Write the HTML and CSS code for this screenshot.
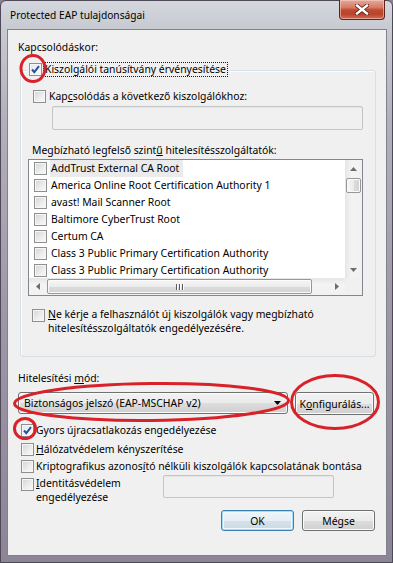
FILE: index.html
```html
<!DOCTYPE html>
<html lang="hu">
<head>
<meta charset="utf-8">
<link rel="stylesheet" href="styles.css">
</head>
<body>
<div class="window">
  <div class="titlebar">
    <span class="title">Protected EAP tulajdonságai</span>
    <div class="close">
      <svg width="14" height="11" viewBox="0 0 14 11"><path d="M2 1.5 L12 9.5 M12 1.5 L2 9.5" stroke="#5a1a10" stroke-width="4" stroke-linecap="square"/><path d="M2 1.5 L12 9.5 M12 1.5 L2 9.5" stroke="#fff" stroke-width="2.4" stroke-linecap="square"/></svg>
    </div>
  </div>
  <div class="client">
    <div class="lbl lbl-top">Kapcsolódáskor:</div>
    <div class="group">
      <div class="legend">
        <span class="cb checked"><svg width="11" height="11" viewBox="0 0 11 11"><path d="M2 5.5 L4.3 8.2 L9 2.2" fill="none" stroke="#2a4f9c" stroke-width="2"/></svg></span>
        <span class="focus">Kiszolgálói tanúsítvány érvényesítése</span>
      </div>
      <div class="row row-connect"><span class="cb"></span><span>Kap<u>c</u>solódás a következő kiszolgálókhoz:</span></div>
      <div class="textbox tb-servers"></div>
      <div class="lbl lbl-ca">Megbízható legfelső szint<u>ű</u> hitelesítésszolgáltatók:</div>
      <div class="listbox">
        <div class="list-main">
          <div class="list-rows">
            <div class="li"><span class="cb"></span><span class="li-text sel">AddTrust External CA Root</span></div>
            <div class="li"><span class="cb"></span><span class="li-text">America Online Root Certification Authority 1</span></div>
            <div class="li"><span class="cb"></span><span class="li-text">avast! Mail Scanner Root</span></div>
            <div class="li"><span class="cb"></span><span class="li-text">Baltimore CyberTrust Root</span></div>
            <div class="li"><span class="cb"></span><span class="li-text">Certum CA</span></div>
            <div class="li"><span class="cb"></span><span class="li-text">Class 3 Public Primary Certification Authority</span></div>
            <div class="li"><span class="cb"></span><span class="li-text">Class 3 Public Primary Certification Authority</span></div>
          </div>
          <div class="vscroll">
            <div class="sb-btn"><svg width="7" height="4" viewBox="0 0 7 4"><path d="M3.5 0 L7 4 L0 4 Z" fill="#6d6d6d"/></svg></div>
            <div class="vthumb"></div>
            <div class="sb-fill"></div>
            <div class="sb-btn"><svg width="7" height="4" viewBox="0 0 7 4"><path d="M0 0 L7 0 L3.5 4 Z" fill="#6d6d6d"/></svg></div>
          </div>
        </div>
        <div class="hscroll-row">
          <div class="hscroll">
            <div class="sb-btn h"><svg width="4" height="7" viewBox="0 0 4 7"><path d="M4 0 L4 7 L0 3.5 Z" fill="#6d6d6d"/></svg></div>
            <div class="hthumb"><span class="grip"></span><span class="grip"></span><span class="grip"></span></div>
            <div class="sb-fill"></div>
            <div class="sb-btn h"><svg width="4" height="7" viewBox="0 0 4 7"><path d="M0 0 L4 3.5 L0 7 Z" fill="#6d6d6d"/></svg></div>
          </div>
          <div class="corner"></div>
        </div>
      </div>
      <div class="row row-ne multi"><span class="cb"></span><span><u>N</u>e kérje a felhasználót új kiszolgálók vagy megbízható<br>hitelesítésszolgáltatók engedélyezésére.</span></div>
    </div>
    <div class="lbl lbl-mode">Hitelesítési <u>m</u>ód:</div>
    <div class="mode-row">
      <div class="combo"><span>Biztonságos jelszó (EAP-MSCHAP v2)</span><svg width="7" height="4" viewBox="0 0 7 4"><path d="M0 0 L7 0 L3.5 4 Z" fill="#000"/></svg></div>
      <div class="btn btn-config">K<u>o</u>nfigurálás...</div>
    </div>
    <div class="row opt opt-fast"><span class="cb checked"><svg width="11" height="11" viewBox="0 0 11 11"><path d="M2 5.5 L4.3 8.2 L9 2.2" fill="none" stroke="#2a4f9c" stroke-width="2"/></svg></span><span>Gyors újracsatlakozás engedélyezése</span></div>
    <div class="row opt opt-nap"><span class="cb"></span><span><u>H</u>álózatvédelem kényszerítése</span></div>
    <div class="row opt opt-crypto"><span class="cb"></span><span>Kriptografikus azonos<u>í</u>tó nélküli kiszolgálók kapcsolatának bontása</span></div>
    <div class="ident-row">
      <div class="row opt multi ident"><span class="cb"></span><span><u>I</u>dentitásvédelem<br>engedélyezése</span></div>
      <div class="textbox tb-ident"></div>
    </div>
    <div class="buttons">
      <div class="btn btn-default">OK</div>
      <div class="btn">Mégse</div>
    </div>
  </div>
  <svg class="annot" width="393" height="563" viewBox="0 0 393 563">
    <ellipse cx="33" cy="68.5" rx="12" ry="13" fill="none" stroke="#d8222a" stroke-width="3"/>
    <ellipse cx="151.5" cy="402" rx="137" ry="18.5" fill="none" stroke="#d8222a" stroke-width="3" transform="rotate(-0.6 151.5 402)"/>
    <ellipse cx="335" cy="402" rx="43.5" ry="26.5" fill="none" stroke="#d8222a" stroke-width="3"/>
    <ellipse cx="25" cy="428.5" rx="10.5" ry="10" fill="none" stroke="#d8222a" stroke-width="3"/>
  </svg>
</div>
</body>
</html>
```
FILE: styles.css
```css
* { box-sizing: border-box; }
html, body { margin: 0; padding: 0; }
body {
  width: 393px;
  height: 563px;
  overflow: hidden;
  background: #8a8292;
  font-family: "Noto Sans", sans-serif;
  font-size: 10.4px;
  color: #000;
}
u { text-decoration: underline; text-underline-offset: 1px; }

.window {
  position: relative;
  width: 393px;
  height: 563px;
  display: flex;
  flex-direction: column;
  background: linear-gradient(180deg, #d4d7dd 0px, #c7cad1 28px, #b3afbc 120px, #a098a9 300px, #8d8597 563px);
  border: 1px solid #4d4956;
  border-radius: 6px 6px 0 0;
  padding: 0 5px 6px 6px;
}

.titlebar {
  height: 28px;
  display: flex;
  justify-content: space-between;
  align-items: flex-start;
  flex: none;
}
.title {
  margin: 7px 0 0 3px;
  line-height: 15px;
  font-size: 10.2px;
}
.close {
  margin: -1px 2px 0 0;
  width: 46px;
  height: 20px;
  border: 1px solid #5e2418;
  border-top: none;
  border-radius: 0 0 4px 4px;
  background: linear-gradient(180deg, #e4aa9c 0%, #d47a64 40%, #c04a30 52%, #b8442a 75%, #d2705a 100%);
  box-shadow: inset 0 0 0 1px rgba(255, 210, 200, 0.55);
  display: flex;
  align-items: center;
  justify-content: center;
}

.client {
  flex: 1;
  background: #f0f0f0;
  border: 1px solid #7f838c;
  padding: 10px 11px 0 10px;
  display: flex;
  flex-direction: column;
  align-items: flex-start;
}

.lbl { line-height: 15px; white-space: nowrap; }

.cb {
  flex: none;
  width: 13px;
  height: 13px;
  border: 1px solid #8e8f8f;
  background: linear-gradient(135deg, #d2d3d6 0%, #eeeeee 60%, #f9f9f9 100%);
  box-shadow: inset 0 0 0 1px #f6f6f6;
  display: flex;
  align-items: center;
  justify-content: center;
}
.cb.checked {
  background: linear-gradient(135deg, #dfe8f4 0%, #f2f6fb 70%, #ffffff 100%);
}

.row {
  display: flex;
  align-items: center;
  gap: 3px;
  line-height: 15px;
  white-space: nowrap;
}
.row.multi { align-items: flex-start; line-height: 14px; }
.row.multi .cb { margin-top: 2px; }

.group {
  margin: 15px 0 0 2px;
  width: 356px;
  height: 287px;
  border: 1px solid #d5dfe5;
  border-radius: 3px;
  box-shadow: inset 1px 1px 0 #fdfdfd;
  display: flex;
  flex-direction: column;
  align-items: flex-start;
}
.legend {
  margin: -9px 0 0 6px;
  padding: 0 2px;
  height: 15px;
  background: #f0f0f0;
  display: flex;
  align-items: center;
  white-space: nowrap;
}
.focus {
  margin-left: 1px;
  border: 1px dotted #1a1a1a;
  padding: 0 1px;
  line-height: 13px;
}
.row-connect { margin: 12px 0 0 12px; }

.textbox {
  border: 1px solid #c3c6c9;
  border-radius: 2px;
  background: #f0f0f0;
  box-shadow: inset 0 1px 0 #e6e6e6;
}
.tb-servers { margin: 2px 0 0 31px; width: 311px; height: 24px; }

.lbl-ca { margin: 13px 0 0 11px; }

.listbox {
  margin: 1px 0 0 7px;
  width: 335px;
  height: 137px;
  border: 1px solid #828790;
  background: #fff;
  display: flex;
  flex-direction: column;
}
.list-main { height: 118px; display: flex; }
.list-rows { flex: 1; overflow: hidden; }
.li {
  height: 17px;
  display: flex;
  align-items: center;
  padding-left: 5px;
  white-space: nowrap;
}
.li-text { margin-left: 3px; padding: 0 1px; line-height: 17px; }
.li-text.sel { background: #ebebeb; padding-right: 4px; }

.vscroll {
  width: 17px;
  display: flex;
  flex-direction: column;
  background: linear-gradient(90deg, #e6e6e6 0%, #f4f4f4 40%, #f1f1f1 100%);
}
.sb-btn {
  flex: none;
  width: 17px;
  height: 17px;
  display: flex;
  align-items: center;
  justify-content: center;
}
.vthumb {
  flex: none;
  height: 15px;
  margin: 1px 1px 0 1px;
  border: 1px solid #979797;
  border-radius: 2px;
  background: linear-gradient(90deg, #f6f6f6 0%, #ececec 50%, #dcdcdc 51%, #d3d3d3 100%);
  box-shadow: inset 0 0 0 1px #fbfbfb;
}
.sb-fill { flex: 1; }

.hscroll-row { height: 17px; display: flex; }
.hscroll {
  flex: 1;
  display: flex;
  background: linear-gradient(180deg, #e6e6e6 0%, #f4f4f4 40%, #f1f1f1 100%);
}
.hthumb {
  flex: none;
  width: 265px;
  margin: 1px 0 1px 1px;
  border: 1px solid #979797;
  border-radius: 2px;
  background: linear-gradient(180deg, #f6f6f6 0%, #ececec 50%, #dcdcdc 51%, #d3d3d3 100%);
  box-shadow: inset 0 0 0 1px #fbfbfb;
  display: flex;
  align-items: center;
  justify-content: center;
  gap: 2px;
}
.grip { width: 1px; height: 6px; background: #5b5b5b; box-shadow: 1px 0 0 #fff; }
.corner { width: 17px; background: #f0f0f0; }

.row-ne { margin: 11px 0 0 11px; }

.lbl-mode { margin-top: 14px; }

.mode-row {
  margin-top: 6px;
  display: flex;
  align-items: flex-start;
}
.combo {
  width: 270px;
  height: 22px;
  border: 1px solid #707070;
  border-radius: 3px;
  background: linear-gradient(180deg, #f2f2f2 0%, #ebebeb 50%, #dddddd 51%, #cfcfcf 100%);
  box-shadow: inset 0 0 0 1px #fbfbfb;
  display: flex;
  align-items: center;
  justify-content: space-between;
  padding: 0 6px 0 5px;
  white-space: nowrap;
}
.btn {
  height: 22px;
  border: 1px solid #707070;
  border-radius: 3px;
  background: linear-gradient(180deg, #f2f2f2 0%, #ebebeb 50%, #dddddd 51%, #cfcfcf 100%);
  box-shadow: inset 0 0 0 1px #fbfbfb;
  display: flex;
  align-items: center;
  justify-content: center;
  white-space: nowrap;
}
.btn-config { margin-left: 7px; width: 79px; height: 23px; }

.opt { margin-left: 3px; gap: 2px; }
.opt-fast { margin-top: 8px; }
.opt-nap { margin-top: 4px; }
.opt-crypto { margin-top: 2px; }

.ident-row {
  margin-top: 2px;
  display: grid;
  grid-template-columns: 145px 171px;
  align-items: start;
}
.ident { line-height: 13px; }
.ident .cb { margin-top: 1px; }
.tb-ident { margin-top: -1px; height: 23px; }

.buttons {
  margin-top: 6px;
  align-self: stretch;
  display: flex;
  justify-content: flex-end;
  gap: 8px;
}
.buttons .btn { width: 73px; height: 21px; }
.btn-default {
  border-color: #3c7fb1;
  background: linear-gradient(180deg, #f0f6fa 0%, #e6eef4 50%, #d6e2ea 51%, #cad9e4 100%);
  box-shadow: inset 0 0 0 1px #a8dcf6, inset 0 0 0 2px #eef7fc;
}

.annot {
  position: absolute;
  left: -1px;
  top: -1px;
  pointer-events: none;
}
```
